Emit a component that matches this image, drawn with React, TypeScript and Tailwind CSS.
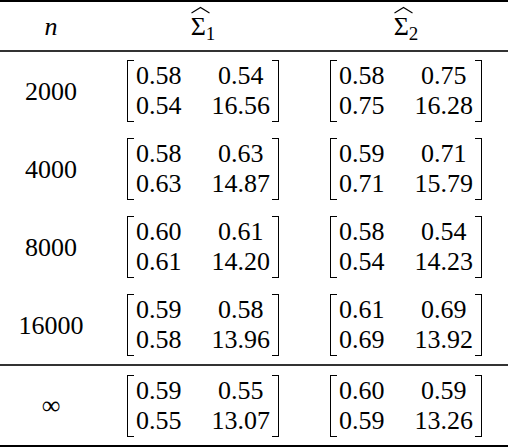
type Row = { n: string; a: string; b: string }

const rows: Row[] = [
  { n: "2000", a: "0.58 0.54 0.54 16.56", b: "0.58 0.75 0.75 16.28" },
  { n: "4000", a: "0.58 0.63 0.63 14.87", b: "0.59 0.71 0.71 15.79" },
  { n: "8000", a: "0.60 0.61 0.61 14.20", b: "0.58 0.54 0.54 14.23" },
  { n: "16000", a: "0.59 0.58 0.58 13.96", b: "0.61 0.69 0.69 13.92" },
]

const last: Row = { n: "∞", a: "0.59 0.55 0.55 13.07", b: "0.60 0.59 0.59 13.26" }

function Matrix({ v }: { v: string }) {
  return (
    <div className="flex items-stretch">
      <div className="w-[7px] border-y-[1.5px] border-l-[1.5px] border-black" />
      <div className="grid grid-cols-[auto_auto] gap-x-[30px] px-[2px] py-[1px] leading-[30px]">
        {v.split(" ").map((x, i) => (
          <span key={i} className="text-center">
            {x}
          </span>
        ))}
      </div>
      <div className="w-[7px] border-y-[1.5px] border-r-[1.5px] border-black" />
    </div>
  )
}

function SigmaHat({ sub }: { sub: string }) {
  return (
    <span className="inline-flex items-baseline leading-none">
      <span className="relative">
        <svg className="absolute left-[0px] top-[-8px]" width="19" height="8" viewBox="0 0 19 8">
          <path d="M0.5 7 L9.5 1.5 L18.5 7" fill="none" stroke="black" strokeWidth="1.1" />
        </svg>
        Σ
      </span>
      <span className="relative top-[5px] text-[19px]">{sub}</span>
    </span>
  )
}

function TableRow({ r, h }: { r: Row; h: string }) {
  return (
    <div className={h}>
      <span className="text-center">{r.n}</span>
      <div className="flex justify-center">
        <Matrix v={r.a} />
      </div>
      <div className="flex justify-center">
        <Matrix v={r.b} />
      </div>
    </div>
  )
}

export default function App() {
  return (
    <div className="[font-family:Liberation_Serif]">
      <div className="h-[448px] w-[508px] bg-white text-[26px] text-black">
        <div className="h-[2px] bg-black" />
        <div className="grid h-[48px] grid-cols-[102px_202px_204px] items-center">
          <span className="text-center italic">n</span>
          <span className="text-center">
            <SigmaHat sub="1" />
          </span>
          <span className="text-center">
            <SigmaHat sub="2" />
          </span>
        </div>
        <div className="h-[2px] bg-[#333]" />
        {rows.map((r) => (
          <TableRow key={r.n} r={r} h="grid h-[78px] grid-cols-[102px_202px_204px] items-center" />
        ))}
        <div className="h-[2px] bg-[#333]" />
        <TableRow r={last} h="grid h-[79px] grid-cols-[102px_202px_204px] items-center" />
        <div className="h-[2px] bg-black" />
      </div>
    </div>
  )
}
